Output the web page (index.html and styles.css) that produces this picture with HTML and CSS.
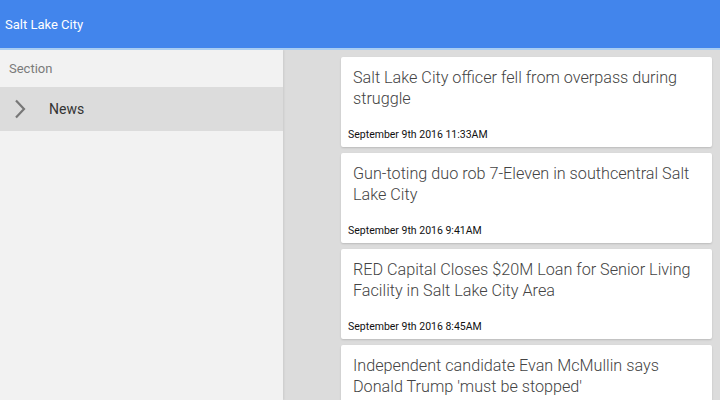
FILE: index.html
```html
<!DOCTYPE html>
<html lang="en">
<head>
    <title>Salt Lake City</title>
    <link rel="stylesheet" href="styles.css">
</head>
<body>
    <div class="toolbar">Salt Lake City</div>

    <div class="main">
        <div class="sidebar">
            <div class="section-title">Section</div>
            <div class="section-item">
                <svg class="chevron" width="12" height="20" viewBox="0 0 12 20">
                    <path d="M2 1.5 L10 10 L2 18.5" fill="none" stroke="#777" stroke-width="2.2"/>
                </svg>
                <span>News</span>
            </div>
        </div>

        <div class="feed">
            <div class="story">
                <p class="headline">Salt Lake City officer fell from overpass during struggle</p>
                <p class="date">September 9th 2016 11:33AM</p>
            </div>
            <div class="story">
                <p class="headline">Gun-toting duo rob 7-Eleven in southcentral Salt Lake City</p>
                <p class="date">September 9th 2016 9:41AM</p>
            </div>
            <div class="story">
                <p class="headline">RED Capital Closes $20M Loan for Senior Living Facility in Salt Lake City Area</p>
                <p class="date">September 9th 2016 8:45AM</p>
            </div>
            <div class="story">
                <p class="headline">Independent candidate Evan McMullin says Donald Trump 'must be stopped'</p>
            </div>
        </div>
    </div>
</body>
</html>
```

FILE: styles.css
```css
body {
    margin: 0;
    font-family: Roboto, "Noto Sans", sans-serif;
    background-color: #dcdcdc;
    height: 400px;
    overflow: hidden;
}

.toolbar {
    height: 48px;
    line-height: 49px;
    padding-left: 5px;
    background-color: #4285ec;
    border-bottom: 2px solid #a9cdf2;
    color: white;
    font-size: 13px;
}

.main {
    display: flex;
    height: 350px;
    overflow: hidden;
}

.sidebar {
    width: 283px;
    background-color: #f2f2f2;
    box-shadow: 1px 0 2px rgba(0,0,0,0.08);
}

.section-title {
    height: 37px;
    line-height: 37px;
    padding-left: 9px;
    font-size: 13px;
    color: #7a7a7a;
}

.section-item {
    display: flex;
    align-items: center;
    height: 44px;
    background-color: #dcdcdc;
    padding-left: 14px;
    font-size: 14px;
    color: #333;
}

.chevron {
    margin-right: 23px;
}

.feed {
    flex: 1;
    display: flex;
    flex-direction: column;
    gap: 6px;
    padding: 7px 8px 0 58px;
}

.story {
    display: flex;
    flex-direction: column;
    flex-shrink: 0;
    height: 90px;
    background-color: white;
    border-radius: 2px;
    box-shadow: 0 1px 2px rgba(0,0,0,0.15);
    box-sizing: border-box;
}

.headline {
    margin: 0;
    padding: 10px 4px 0 12px;
    font-size: 16.2px;
    font-weight: 300;
    line-height: 21px;
    color: #444;
}

.date {
    margin: auto 0 0 0;
    padding: 0 0 6px 7px;
    font-size: 10.5px;
    font-weight: 400;
    color: #111;
}
```
